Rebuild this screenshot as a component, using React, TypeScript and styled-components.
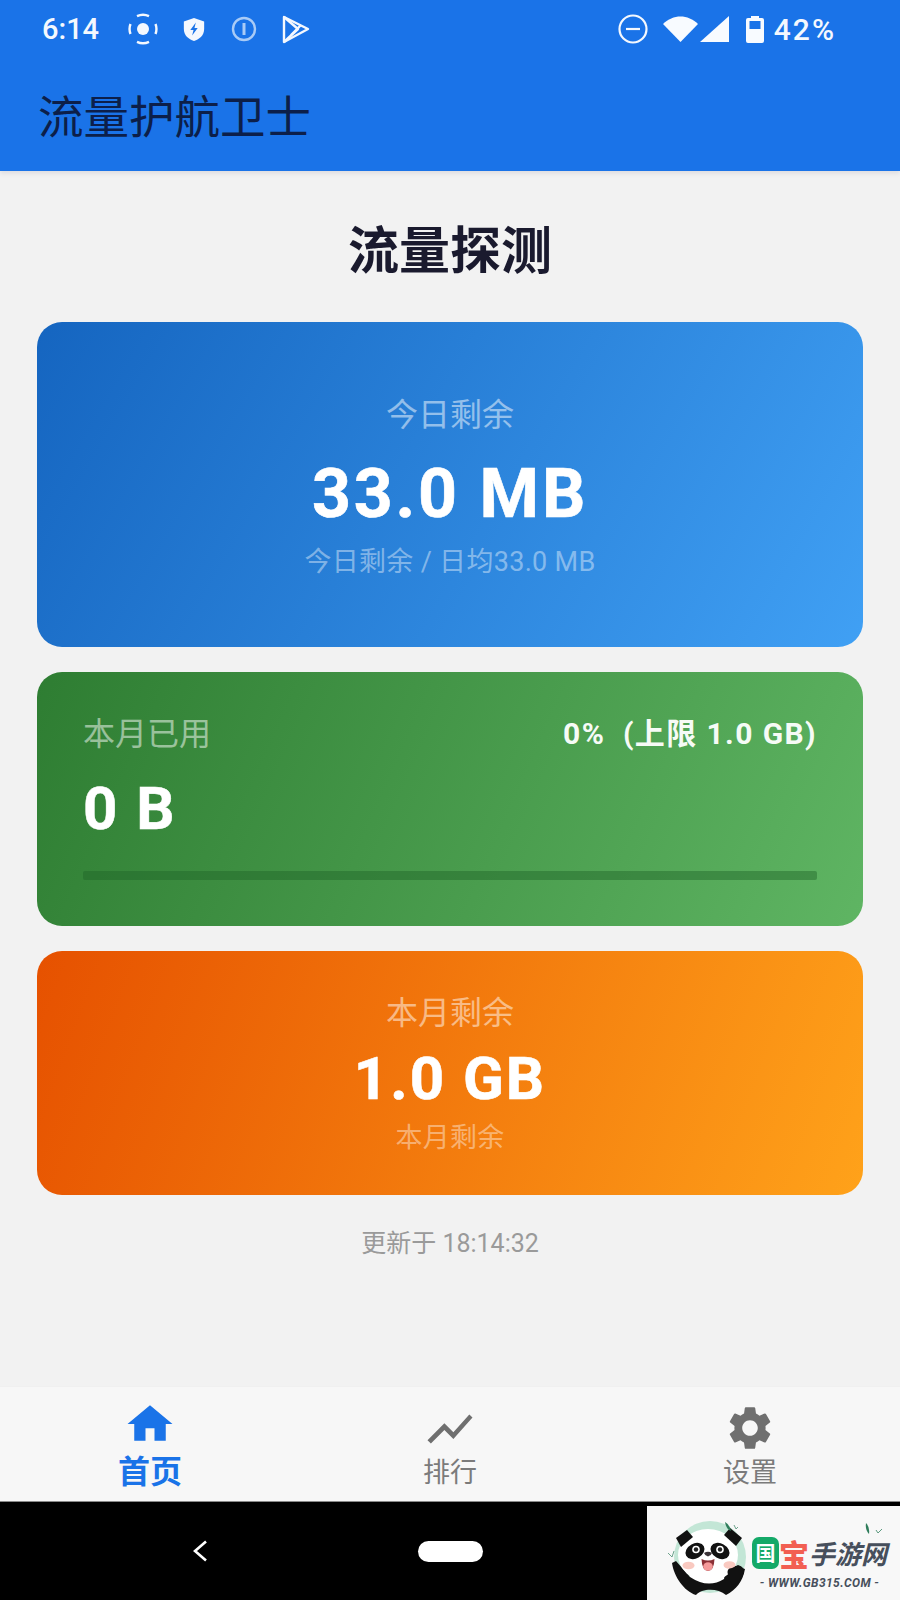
import React from "react";
import styled, { createGlobalStyle } from "styled-components";

const Global = createGlobalStyle`
  html, body { margin: 0; padding: 0; background: #f2f2f2; }
  * { box-sizing: border-box; }
  body { font-family: Roboto, "Noto Sans CJK SC", sans-serif; }
`;

const Screen = styled.div`
  width: 900px;
  height: 1600px;
  display: flex;
  flex-direction: column;
  position: relative;
  overflow: hidden;
  background: #f2f2f2;
`;

const AppBar = styled.header`
  height: 171px;
  background: #1a73e8;
  box-shadow: 0 2px 5px rgba(60, 50, 80, 0.12);
  display: flex;
  flex-direction: column;
  position: relative;
  flex: none;
`;

const StatusBar = styled.div`
  height: 58px;
  padding: 0 64px 0 42px;
  display: flex;
  align-items: center;
  color: #f4f8fe;
  font-size: 29px;
  font-weight: 500;
`;

const Time = styled.span`
  width: 85px;
  flex: none;
`;

const StatusIcon = styled.svg<{ $gap?: number }>`
  flex: none;
  display: block;
  margin-left: ${(p) => p.$gap ?? 0}px;
`;

const Spacer = styled.div`
  flex: 1;
`;

const Percent = styled.span`
  margin-left: 10px;
  font-size: 30px;
  letter-spacing: 2px;
`;

const AppTitle = styled.h1`
  margin: 0;
  padding: 22px 0 0 38px;
  font-size: 45.5px;
  line-height: 68px;
  font-weight: 400;
  color: #0c1f4a;
  font-family: "Noto Sans CJK SC", sans-serif;
`;

const Main = styled.main`
  flex: 1;
  padding: 41px 37px 0 37px;
  display: flex;
  flex-direction: column;
`;

const PageTitle = styled.h2`
  margin: 0 0 39px;
  font-size: 51px;
  line-height: 71px;
  font-weight: 700;
  text-align: center;
  color: #1a1a2e;
  font-family: "Noto Sans CJK SC", sans-serif;
`;

const Card = styled.section<{ $angle: number; $from: string; $to: string; $h: number; $mb: number }>`
  height: ${(p) => p.$h}px;
  margin-bottom: ${(p) => p.$mb}px;
  border-radius: 25px;
  background: linear-gradient(${(p) => p.$angle}deg, ${(p) => p.$from}, ${(p) => p.$to});
  color: #fff;
  flex: none;
`;

const CenterStack = styled.div<{ $pt: number }>`
  display: flex;
  flex-direction: column;
  align-items: center;
  padding-top: ${(p) => p.$pt}px;
`;

const Label = styled.div`
  font-size: 32px;
  line-height: 46px;
  color: rgba(255, 255, 255, 0.5);
  font-family: "Noto Sans CJK SC", sans-serif;
`;

const BigValue = styled.div<{ $size: number; $h: number; $mt: number; $mb: number; $ls: number }>`
  font-size: ${(p) => p.$size}px;
  line-height: ${(p) => p.$h}px;
  margin: ${(p) => p.$mt}px 0 ${(p) => p.$mb}px;
  font-weight: 700;
  color: #fff;
  letter-spacing: ${(p) => p.$ls}px;
  -webkit-text-stroke: 0.6px #fff;
`;

const Sub = styled.div`
  font-size: 27px;
  line-height: 38px;
  letter-spacing: 0.3px;
  color: rgba(255, 255, 255, 0.42);
`;

const UsedCard = styled.div`
  padding: 36px 46px 0;
`;

const UsedHeader = styled.div`
  display: flex;
  justify-content: space-between;
  align-items: center;
`;

const UsedRatio = styled.div`
  font-size: 30px;
  font-weight: 700;
  letter-spacing: 1.4px;
  color: #f6fbf6;
`;

const UsedValue = styled.div`
  margin-top: 19px;
  font-size: 60px;
  line-height: 72px;
  font-weight: 700;
  letter-spacing: 2px;
  -webkit-text-stroke: 0.5px #fff;
  color: #fff;
`;

const Track = styled.div`
  margin-top: 26px;
  height: 9px;
  border-radius: 2px;
  background: rgba(30, 100, 40, 0.45);
`;

const Updated = styled.div`
  margin-top: 31px;
  text-align: center;
  font-size: 25px;
  line-height: 36px;
  color: #9a9a9a;
`;

const BottomNav = styled.nav`
  height: 116px;
  flex: none;
  background: #f7f7f7;
  border-top: 1px solid #f0f0f0;
  border-bottom: 1px solid #8a8a8a;
  display: grid;
  grid-template-columns: repeat(3, 1fr);
`;

const NavItem = styled.div<{ $active?: boolean }>`
  display: flex;
  flex-direction: column;
  align-items: center;
  padding-top: ${(p) => (p.$active ? 12 : 15)}px;
  color: ${(p) => (p.$active ? "#1a73e8" : "#6f6f6f")};
`;

const NavLabel = styled.span<{ $active?: boolean }>`
  font-size: ${(p) => (p.$active ? 32 : 27)}px;
  line-height: ${(p) => (p.$active ? 44 : 38)}px;
  font-weight: ${(p) => (p.$active ? 700 : 400)};
  color: ${(p) => (p.$active ? "#1a73e8" : "#7b7b7b")};
  margin-top: ${(p) => (p.$active ? 0 : 1)}px;
`;

const NavIcon = styled.svg<{ $mb: number }>`
  display: block;
  fill: currentColor;
  margin-bottom: ${(p) => p.$mb}px;
`;

const SystemBar = styled.div`
  height: 98px;
  flex: none;
  background: #000;
  display: flex;
  align-items: center;
  padding-left: 192px;
`;

const BackIcon = styled.svg`
  display: block;
  flex: none;
`;

const HomePill = styled.div`
  width: 65px;
  height: 21px;
  margin-left: 210px;
  border-radius: 11px;
  background: #fff;
  flex: none;
`;

const Watermark = styled.div`
  position: absolute;
  right: 0;
  bottom: 0;
  width: 253px;
  height: 94px;
  background: #f8f8f8;
  display: flex;
  align-items: flex-end;
  padding-left: 13px;
`;

const PandaSvg = styled.svg`
  display: block;
  flex: none;
`;

const Brand = styled.div`
  position: relative;
  margin-left: -8px;
  align-self: flex-start;
  margin-top: 30px;
  display: flex;
  flex-direction: column;
  align-items: center;
`;

const BrandRow = styled.div`
  display: flex;
  align-items: center;
  height: 34px;
`;

const GreenChar = styled.span`
  width: 27px;
  height: 32px;
  border-radius: 7px;
  background: #14a968;
  color: #fff;
  font-size: 20px;
  font-weight: 700;
  line-height: 32px;
  text-align: center;
  font-family: "Noto Sans CJK SC", sans-serif;
`;

const RedChar = styled.span`
  font-size: 30px;
  font-weight: 900;
  line-height: 34px;
  color: #f25f52;
  font-family: "Noto Sans CJK SC", sans-serif;
`;

const GrayChars = styled.span`
  font-size: 26px;
  font-weight: 700;
  line-height: 34px;
  font-style: italic;
  color: #474f5c;
  font-family: "Noto Sans CJK SC", sans-serif;
`;

const Domain = styled.div`
  margin-top: 5px;
  font-size: 12px;
  line-height: 16px;
  font-weight: 700;
  font-style: italic;
  letter-spacing: 0.4px;
  color: #474f5c;
  white-space: nowrap;
`;

const LeafMark = styled.svg`
  position: absolute;
  right: 2px;
  top: -13px;
`;

const Panda = () => (
  <PandaSvg width="100" height="85" viewBox="0 0 100 85">
    <circle cx="50" cy="42" r="36" fill="#c3e6d6" />
    <path d="M12 48 C14 62 24 76 36 80 C42 73 58 73 66 80 C76 75 83 66 85 54 L72 50 L60 62 L30 62 L16 46 Z" fill="#111" />
    <ellipse cx="48" cy="40" rx="30" ry="26" fill="#fff" />
    <path d="M30 62 Q48 74 64 64 L66 52 L28 52 Z" fill="#fff" />
    <path d="M16 23 L27 15 L33 22 L21 32 Z" fill="#111" />
    <path d="M82 23 L70 13 L64 20 L76 31 Z" fill="#111" />
    <ellipse cx="35" cy="36" rx="10" ry="7.5" fill="#111" transform="rotate(-28 35 36)" />
    <ellipse cx="60" cy="36" rx="10" ry="7.5" fill="#111" transform="rotate(28 60 36)" />
    <circle cx="36" cy="34.5" r="3.8" fill="#fff" />
    <circle cx="36" cy="34.5" r="2.2" fill="#222" />
    <circle cx="60" cy="34.5" r="3.8" fill="#fff" />
    <circle cx="60" cy="34.5" r="2.2" fill="#222" />
    <path d="M44 38 Q48 35.5 52 38 Q51 41 48 41.5 Q45 41 44 38 Z" fill="#3b3338" />
    <path d="M41.5 44 Q48 47 54.5 44 Q54 56 48 56 Q42 56 41.5 44 Z" fill="#8c2f35" />
    <ellipse cx="48" cy="51.5" rx="4.8" ry="4.2" fill="#f59a9a" />
    <ellipse cx="28.5" cy="50.5" rx="6" ry="3.8" fill="#f9c9c0" />
    <ellipse cx="69.5" cy="50" rx="6" ry="3.8" fill="#f9c9c0" />
    <path d="M68 60 Q66 53 72 53 L78 50 Q85 52 84 58 Q80 68 72 70 Z" fill="#111" />
    <path d="M65 7 Q70 10 71 16 Q66 14 65 7 Z" fill="#2f7d5b" />
    <path d="M76 14 L78 12 M76 14 L74 10 M8 38 L12 42 L14 36" stroke="#5d9a80" strokeWidth="0.9" fill="none" />
  </PandaSvg>
);

const Card1 = () => (
  <Card $angle={120} $from="#1565c0" $to="#40a0f4" $h={325} $mb={25}>
    <CenterStack $pt={67}>
      <Label>今日剩余</Label>
      <BigValue $size={68} $h={86} $mt={16} $mb={6} $ls={2.8}>33.0 MB</BigValue>
      <Sub>今日剩余 / 日均33.0 MB</Sub>
    </CenterStack>
  </Card>
);

const Card2 = () => (
  <Card $angle={114} $from="#2e7d32" $to="#5fb563" $h={254} $mb={25}>
    <UsedCard>
      <UsedHeader>
        <Label>本月已用</Label>
        <UsedRatio>0% &nbsp;(上限 1.0 GB)</UsedRatio>
      </UsedHeader>
      <UsedValue>0 B</UsedValue>
      <Track />
    </UsedCard>
  </Card>
);

const Card3 = () => (
  <Card $angle={110} $from="#e65100" $to="#ffa21a" $h={244} $mb={0}>
    <CenterStack $pt={36}>
      <Label>本月剩余</Label>
      <BigValue $size={60} $h={76} $mt={8} $mb={2} $ls={2}>1.0 GB</BigValue>
      <Sub>本月剩余</Sub>
    </CenterStack>
  </Card>
);

export default function App() {
  return (
    <>
      <Global />
      <Screen>
        <AppBar>
          <StatusBar>
            <Time>6:14</Time>
            <StatusIcon width="32" height="32" viewBox="0 0 32 32" fill="none" stroke="#f4f8fe" strokeWidth="2.4">
              <circle cx="16" cy="16" r="6" fill="#f4f8fe" stroke="none" />
              <path d="M3.5 11a14 14 0 0 0 0 10M28.5 11a14 14 0 0 1 0 10M10 3.2a14 14 0 0 1 12 0M10 28.8a14 14 0 0 0 12 0" />
            </StatusIcon>
            <StatusIcon $gap={23} width="24" height="26" viewBox="0 0 26 28">
              <path d="M13 2 L24 6 V14 C24 21 19 25 13 27 C7 25 2 21 2 14 V6 Z" fill="#f4f8fe" />
              <path d="M15 7 L9 15 H12.5 L11 21 L17 13 H13.5 Z" fill="#1a73e8" />
            </StatusIcon>
            <StatusIcon $gap={25} width="26" height="26" viewBox="0 0 26 26" fill="none" stroke="#a9cbf6" strokeWidth="2.4">
              <circle cx="13" cy="13" r="11" />
              <path d="M13 7v12" strokeWidth="3" />
            </StatusIcon>
            <StatusIcon $gap={24} width="30" height="30" viewBox="0 0 30 30" fill="none" stroke="#f4f8fe" strokeWidth="2.4" strokeLinejoin="round">
              <path d="M3 3 L27 15 L3 28 Z" />
              <path d="M3 3 L17 15 L3 28 M10 21 L20 11" />
            </StatusIcon>
            <Spacer />
            <StatusIcon width="30" height="30" viewBox="0 0 30 30" fill="none" stroke="#f4f8fe" strokeWidth="2.2">
              <circle cx="15" cy="15" r="13.5" />
              <path d="M8 15h14" />
            </StatusIcon>
            <StatusIcon $gap={15} width="35" height="26" viewBox="0 0 35 26">
              <path d="M0 8 C10 -2 25 -2 35 8 L17.5 26 Z" fill="#f8fbff" />
            </StatusIcon>
            <StatusIcon $gap={2} width="29" height="26" viewBox="0 0 29 26">
              <path d="M29 0 V26 H0 Z" fill="#f8fbff" />
            </StatusIcon>
            <StatusIcon $gap={17} width="18" height="27" viewBox="0 0 18 27">
              <path d="M5 0h8v2h3a2 2 0 0 1 2 2v21a2 2 0 0 1-2 2H2a2 2 0 0 1-2-2V4a2 2 0 0 1 2-2h3z" fill="#f8fbff" />
              <rect x="3.5" y="5" width="11" height="8" fill="#1a73e8" />
            </StatusIcon>
            <Percent>42%</Percent>
          </StatusBar>
          <AppTitle>流量护航卫士</AppTitle>
        </AppBar>
        <Main>
          <PageTitle>流量探测</PageTitle>
          <Card1 />
          <Card2 />
          <Card3 />
          <Updated>更新于 18:14:32</Updated>
        </Main>
        <BottomNav>
          <NavItem $active>
            <NavIcon $mb={1} width="54" height="50" viewBox="0 0 24 24" preserveAspectRatio="none">
              <path d="M10 20v-6h4v6h5v-8h3L12 3 2 12h3v8z" />
            </NavIcon>
            <NavLabel $active>首页</NavLabel>
          </NavItem>
          <NavItem>
            <NavIcon $mb={-3} width="54" height="54" viewBox="0 0 24 24">
              <path d="M3.5 18.49l6-6.01 4 4L22 6.92l-1.41-1.41-7.09 7.97-4-4L2 16.99z" />
            </NavIcon>
            <NavLabel>排行</NavLabel>
          </NavItem>
          <NavItem>
            <NavIcon $mb={-1} width="52" height="52" viewBox="0 0 24 24">
              <path d="M19.14,12.94c0.04-0.3,0.06-0.61,0.06-0.94c0-0.32-0.02-0.64-0.07-0.94l2.03-1.58c0.18-0.14,0.23-0.41,0.12-0.61 l-1.92-3.32c-0.12-0.22-0.37-0.29-0.59-0.22l-2.39,0.96c-0.5-0.38-1.03-0.7-1.62-0.94L14.4,2.81c-0.04-0.24-0.24-0.41-0.48-0.41 h-3.84c-0.24,0-0.43,0.17-0.47,0.41L9.25,5.35C8.66,5.59,8.12,5.92,7.63,6.29L5.24,5.33c-0.22-0.08-0.47,0-0.59,0.22L2.74,8.87 C2.62,9.08,2.66,9.34,2.86,9.48l2.03,1.58C4.84,11.36,4.8,11.69,4.8,12s0.02,0.64,0.07,0.94l-2.03,1.58 c-0.18,0.14-0.23,0.41-0.12,0.61l1.92,3.32c0.12,0.22,0.37,0.29,0.59,0.22l2.39-0.96c0.5,0.38,1.03,0.7,1.62,0.94l0.36,2.54 c0.05,0.24,0.24,0.41,0.48,0.41h3.84c0.24,0,0.44-0.17,0.47-0.41l0.36-2.54c0.59-0.24,1.13-0.56,1.62-0.94l2.39,0.96 c0.22,0.08,0.47,0,0.59-0.22l1.92-3.32c0.12-0.22,0.07-0.47-0.12-0.61L19.14,12.94z M12,15.6c-1.98,0-3.6-1.62-3.6-3.6 s1.62-3.6,3.6-3.6s3.6,1.62,3.6,3.6S13.98,15.6,12,15.6z" />
            </NavIcon>
            <NavLabel>设置</NavLabel>
          </NavItem>
        </BottomNav>
        <SystemBar>
          <BackIcon width="16" height="22" viewBox="0 0 16 22" fill="none" stroke="#fff" strokeWidth="2.6">
            <path d="M14 1.5 L3 11 L14 20.5" />
          </BackIcon>
          <HomePill />
        </SystemBar>
        <Watermark>
          <Panda />
          <Brand>
            <LeafMark width="22" height="12" viewBox="0 0 22 12">
              <path d="M3 0 Q7 4 6 11 Q2 7 3 0 Z" fill="#2f7d5b" />
              <path d="M13 7 L15 10 L19 6" stroke="#5d9a80" strokeWidth="1" fill="none" />
            </LeafMark>
            <BrandRow>
              <GreenChar>国</GreenChar>
              <RedChar>宝</RedChar>
              <GrayChars>手游网</GrayChars>
            </BrandRow>
            <Domain>- WWW.GB315.COM -</Domain>
          </Brand>
        </Watermark>
      </Screen>
    </>
  );
}
